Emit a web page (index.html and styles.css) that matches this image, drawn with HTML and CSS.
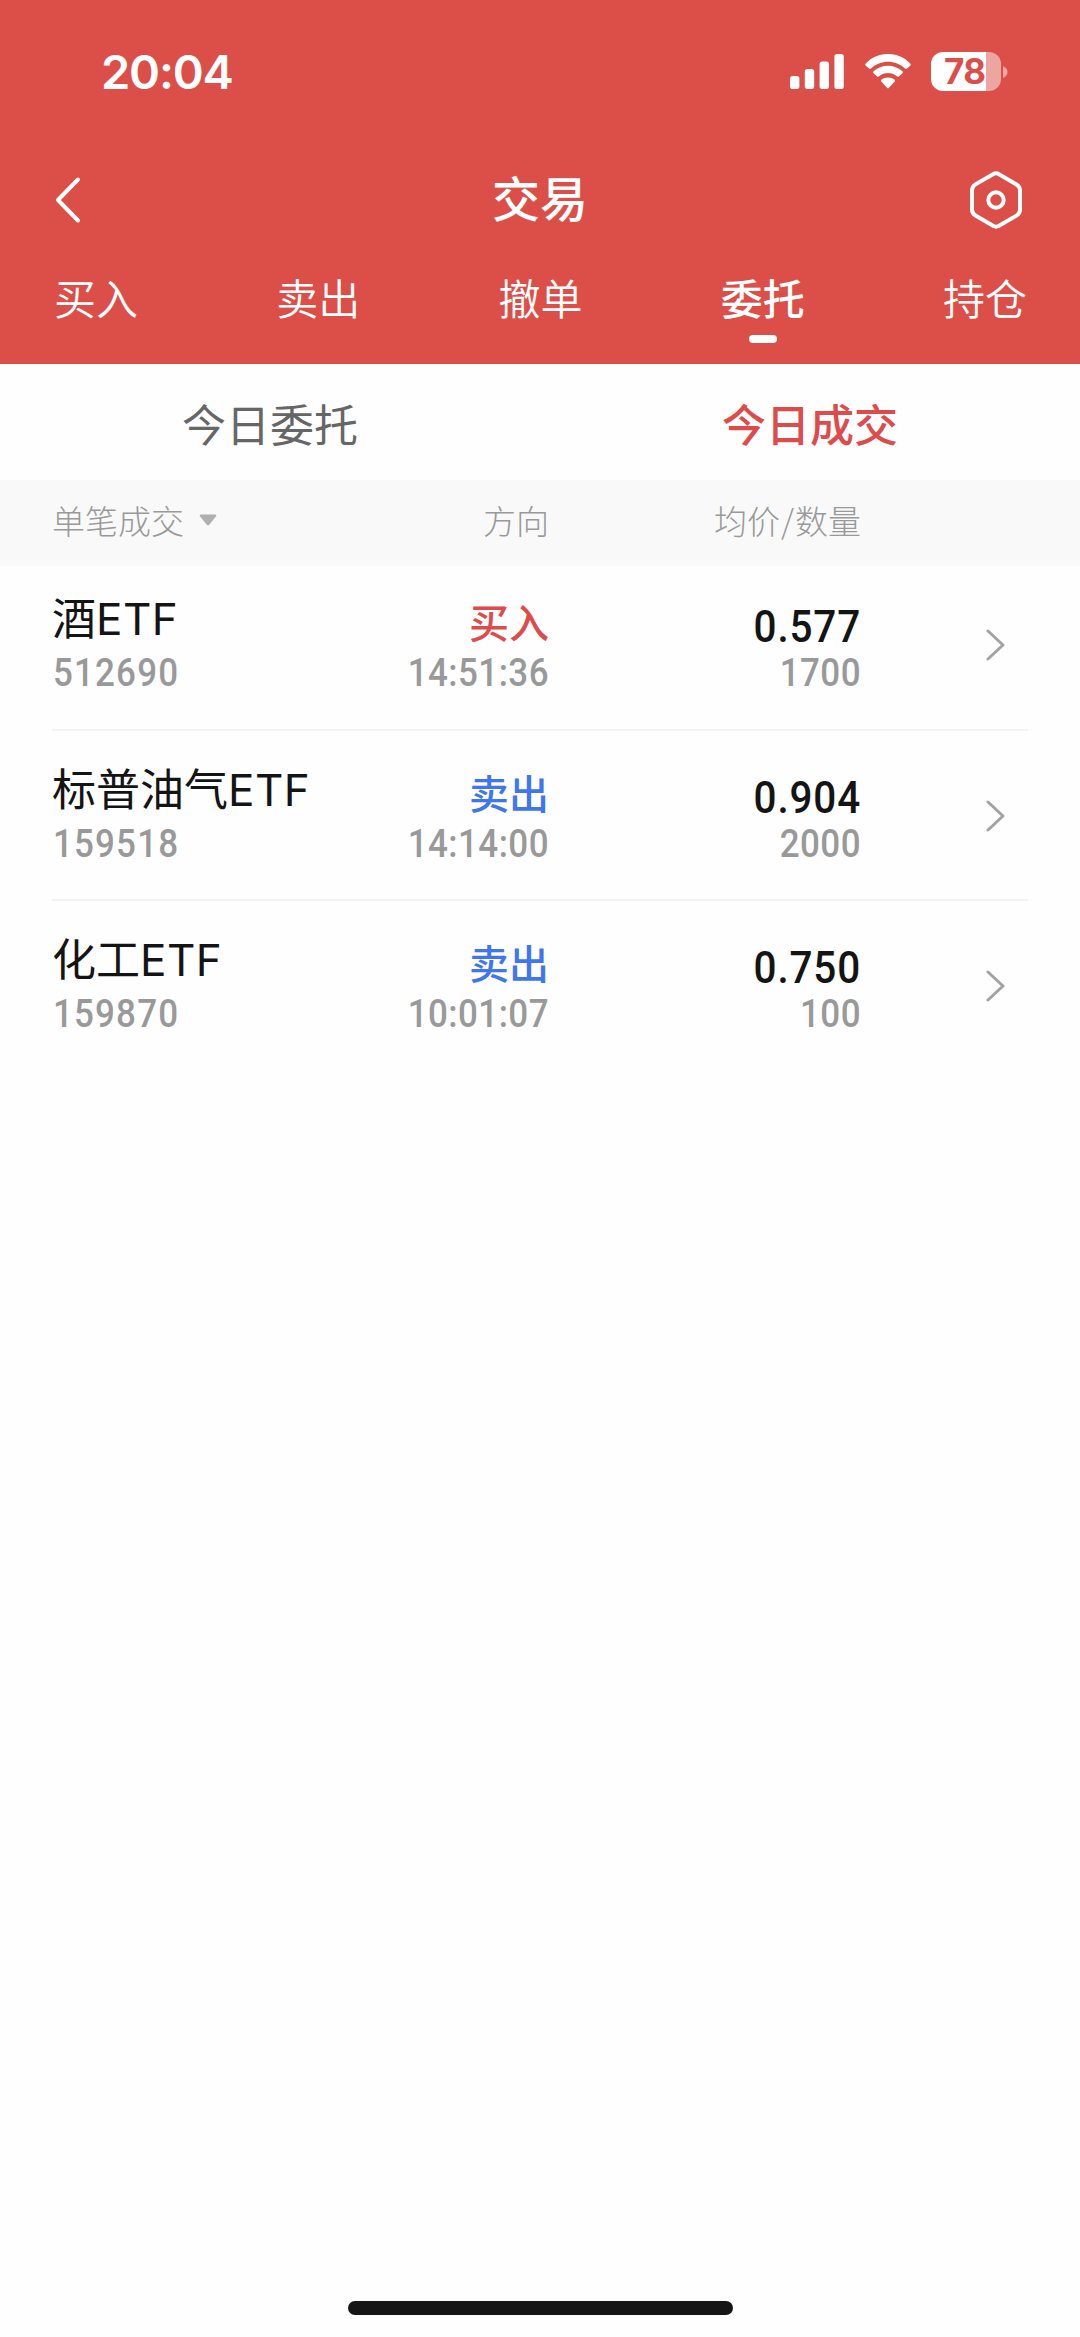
FILE: index.html
```html
<!DOCTYPE html>
<html lang="zh-CN">
<head>
<meta charset="utf-8">
<title>交易</title>
<link rel="stylesheet" href="styles.css">
</head>
<body>
<div class="screen">
  <header class="header">
    <div class="status">
      <span class="clock">20:04</span>
      <div class="status-icons">
        <svg class="signal" width="54" height="35" viewBox="0 0 54 35" fill="#fff"><rect x="0" y="22" width="9.4" height="13" rx="2.8"/><rect x="14.8" y="15" width="9.4" height="20" rx="2.8"/><rect x="29.6" y="7.5" width="9.4" height="27.5" rx="2.8"/><rect x="44.4" y="0" width="9.4" height="35" rx="2.8"/></svg>
        <svg class="wifi" width="46" height="35" viewBox="0 0 46 35" fill="#fff"><path d="M1 9.200C13-3.100 33-3.100 45 9.200Q46.500 10.600 45 12L42 14.500Q41 15.300 40 14.400C31 5.400 15 5.400 6 14.400Q5 15.300 4 14.500L1 12Q-.5 10.600 1 9.200Z"/><path d="M8.500 17.300C16.500 9.800 29.500 9.800 37.500 17.300Q38.500 18.300 37.500 19.300L34 22.400Q33 23.200 32 22.300C27 17.800 19 17.800 14 22.300Q13 23.200 12 22.400L8.500 19.300Q7.500 18.300 8.500 17.300Z"/><path d="M16.300 25.800C20 22.700 26 22.700 29.700 25.800Q30.500 26.700 29.700 27.600L24 33.800Q23 34.800 22 33.800L16.300 27.600Q15.500 26.700 16.300 25.800Z"/></svg>
        <div class="battery"><span class="level">78</span><svg class="knob" width="5" height="12" viewBox="0 0 5 12"><path d="M0 0Q4.500 2 4.500 6T0 12Z" fill="#fff" fill-opacity=".5"/></svg></div>
      </div>
    </div>
    <div class="navbar">
      <svg width="30" height="50" viewBox="0 0 30 50" fill="none" stroke="#fff" stroke-width="4" stroke-linecap="round" stroke-linejoin="round"><path d="M28 4.500L8 25L28 45.500"/></svg>
      <h1 class="title">交易</h1>
      <svg width="54" height="60" viewBox="0 0 54 60" fill="none" stroke="#fff" stroke-width="4"><path d="M24 4.200Q27 2.500 30 4.200L47.500 14.400Q51 16.500 51 20.500V39.500Q51 43.500 47.500 45.600L30 55.800Q27 57.500 24 55.800L6.500 45.600Q3 43.500 3 39.500V20.500Q3 16.500 6.500 14.400Z"/><circle cx="27" cy="30" r="7.700"/></svg>
    </div>
    <nav class="tabs">
      <span class="tab">买入</span>
      <span class="tab">卖出</span>
      <span class="tab">撤单</span>
      <span class="tab active">委托</span>
      <span class="tab">持仓</span>
    </nav>
  </header>
  <div class="subtabs">
    <span class="subtab">今日委托</span>
    <span class="subtab selected">今日成交</span>
  </div>
  <div class="table-head grid">
    <span class="filter">单笔成交<svg width="18" height="12" viewBox="0 0 18 12"><path d="M2 .5H16Q18 .5 17 2.300L10.300 10.800Q9 12.300 7.700 10.800L1 2.300Q0 .5 2 .5Z" fill="#b0b0b0"/></svg></span>
    <span class="right">方向</span>
    <span class="right">均价<span class="slash">/</span>数量</span>
  </div>
  <main class="list">
    <div class="row grid">
      <div><div class="name">酒<span class="latin">ETF</span></div><div class="num">512690</div></div>
      <div class="right"><div class="side buy">买入</div><div class="num time">14:51:36</div></div>
      <div class="right"><div class="price">0.577</div><div class="num qty">1700</div></div>
      <svg class="chevron" width="20" height="34" viewBox="0 0 20 34"><path d="M3 3L18 17L3 31"/></svg>
    </div>
    <div class="row grid">
      <div><div class="name">标普油气<span class="latin">ETF</span></div><div class="num">159518</div></div>
      <div class="right"><div class="side sell">卖出</div><div class="num time">14:14:00</div></div>
      <div class="right"><div class="price">0.904</div><div class="num qty">2000</div></div>
      <svg class="chevron" width="20" height="34" viewBox="0 0 20 34"><path d="M3 3L18 17L3 31"/></svg>
    </div>
    <div class="row grid">
      <div><div class="name">化工<span class="latin">ETF</span></div><div class="num">159870</div></div>
      <div class="right"><div class="side sell">卖出</div><div class="num time">10:01:07</div></div>
      <div class="right"><div class="price">0.750</div><div class="num qty">100</div></div>
      <svg class="chevron" width="20" height="34" viewBox="0 0 20 34"><path d="M3 3L18 17L3 31"/></svg>
    </div>
  </main>
  <div class="home-bar"></div>
</div>
</body>
</html>
```
FILE: styles.css
```css
* { box-sizing: border-box; }
body {
  margin: 0;
  background: #fefefe;
  color: #141414;
  font-family: "Noto Sans CJK SC", sans-serif;
}
svg { display: block; flex: none; }
.screen {
  width: 1080px;
  height: 2337px;
  display: flex;
  flex-direction: column;
}
.header {
  height: 364px;
  flex: none;
  background: #dc4f48;
  color: #fff;
}
.status {
  height: 143px;
  padding: 0 72px 0 101px;
  display: flex;
  justify-content: space-between;
  align-items: center;
}
.clock {
  font: 600 47px/60px Inter, sans-serif;
  letter-spacing: -1.200px;
}
.status-icons { display: flex; align-items: center; }
.wifi { margin: 0 20px 0 21px; }
.battery { display: flex; align-items: center; gap: 2px; }
.level {
  width: 70px;
  height: 39px;
  padding-left: 13px;
  border-radius: 12px;
  background: linear-gradient(to right, #fff 55px, #eda5a2 55px);
  color: #dc4f48;
  font: 700 35px/39px Inter, sans-serif;
  letter-spacing: -0.500px;
}
.navbar {
  height: 113px;
  padding: 0 57px 0 50px;
  display: grid;
  grid-template-columns: 1fr auto 1fr;
  align-items: center;
}
.navbar svg:last-child { justify-self: end; }
.title {
  margin: 0 0 8px;
  padding-left: 7px;
  font-size: 48px;
  line-height: 60px;
  font-weight: 500;
}
.tabs {
  padding: 11px 53px 0 54px;
  display: flex;
  justify-content: space-between;
}
.tab {
  display: flex;
  flex-direction: column;
  align-items: center;
  font-size: 42px;
  line-height: 60px;
  font-weight: 350;
}
.active { font-weight: 500; }
.active::after {
  content: "";
  width: 28px;
  height: 8px;
  margin-top: 8px;
  border-radius: 4px;
  background: #fff;
}
.subtabs {
  height: 116px;
  flex: none;
  display: grid;
  grid-template-columns: 1fr 1fr;
  text-align: center;
  color: #666;
  font-size: 44px;
  line-height: 118px;
}
.selected { color: #de4b4b; font-weight: 500; }
.grid {
  display: grid;
  grid-template-columns: 300px 197px 312px 144px;
  margin: 0 52px;
}
.right { text-align: right; }
.table-head {
  height: 86px;
  flex: none;
  margin: 0;
  padding: 0 52px;
  background: #f9f9f9;
  color: #999;
  font-size: 33px;
  line-height: 80px;
  font-weight: 300;
}
.filter {
  height: 80px;
  display: flex;
  align-items: center;
  gap: 15px;
}
.slash { margin: 0 1px; }
.list { margin-top: -6px; }
.row {
  height: 170.700px;
  padding: 28px 0 0;
  border-bottom: 2px solid #f3f3f3;
}
.row:last-child { border-bottom: 0; }
.name {
  height: 63px;
  font: 400 44px/62px Inter, "Noto Sans CJK SC", sans-serif;
}
.latin { letter-spacing: 0.500px; }
.num {
  height: 44px;
  padding-left: 1px;
  color: #999;
  font: 500 38px/45px Roboto, sans-serif;
  letter-spacing: 1.300px;
  transform: scaleX(0.920);
  transform-origin: left;
}
.time,
.qty {
  letter-spacing: 0.500px;
  transform-origin: right;
}
.side {
  height: 63px;
  font-size: 40px;
  line-height: 67px;
  font-weight: 500;
}
.buy { color: #de4b4b; }
.sell { color: #3f76f0; }
.price {
  height: 63px;
  font: 500 44px/78px Roboto, sans-serif;
  letter-spacing: 0.900px;
  transform: scaleX(0.920);
  transform-origin: right;
}
.chevron {
  justify-self: end;
  margin-top: 40px;
  fill: none;
  stroke: #a3a3a3;
  stroke-width: 3;
  stroke-linecap: round;
  stroke-linejoin: round;
}
.home-bar {
  width: 385px;
  height: 14px;
  margin: auto auto 22px;
  border-radius: 7px;
  background: #151515;
}
```
